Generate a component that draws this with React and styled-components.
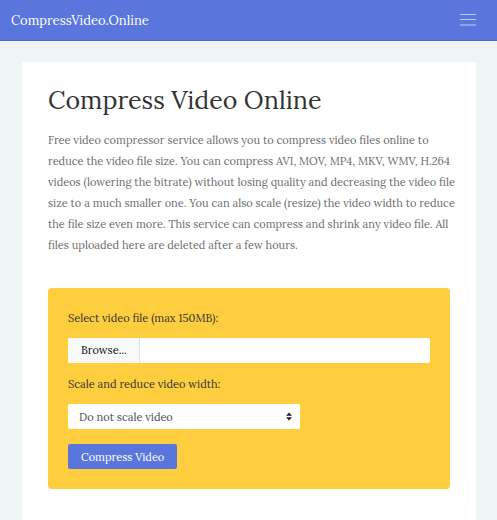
import React from "react"
import styled, { createGlobalStyle } from "styled-components"

const GlobalStyle = createGlobalStyle`
  *,
  *::before,
  *::after {
    box-sizing: border-box;
  }

  body {
    margin: 0;
    background: #eff4f6;
    color: #6c6c6c;
    font-family: Lora, "Liberation Serif", serif;
    font-size: 11px;
  }
`

const Navbar = styled.nav`
  display: flex;
  align-items: center;
  justify-content: space-between;
  height: 41px;
  padding: 0 21px 0 11px;
  border-bottom: 1px solid #5069c9;
  background: #5a76dc;
`

const Brand = styled.a`
  color: #fff;
  font-size: 13px;
  text-decoration: none;
`

const MenuButton = styled.button`
  padding: 0;
  border: 0;
  background: none;
  cursor: pointer;

  svg {
    display: block;
    width: 16px;
    height: 12px;
    stroke: #c0ccf5;
  }
`

const Card = styled.main`
  min-height: 458px;
  margin: 21px 21px 0 22px;
  padding: 21px 26px 31px;
  border-radius: 2px 2px 0 0;
  background: #fff;
`

const Title = styled.h1`
  margin: 0;
  color: #333;
  font-size: 25px;
  font-weight: 400;
  line-height: 34px;
`

const Intro = styled.p`
  margin: 13px -8px 32px 0;
  line-height: 21px;
`

const Form = styled.form`
  display: flex;
  flex-direction: column;
  align-items: flex-start;
  padding: 20px;
  border-radius: 4px;
  background: #ffce3e;
`

const Field = styled.div`
  display: flex;
  flex-direction: column;
  width: ${({ $width }) => $width || "100%"};
  margin-bottom: 11px;
`

const Label = styled.label`
  margin-bottom: 10px;
  color: #333;
  line-height: 20px;
`

const FilePicker = styled.label`
  display: flex;
  position: relative;
  height: 25px;
  border-radius: 2px;
  background: #fff;
  overflow: hidden;
  cursor: pointer;

  input {
    position: absolute;
    width: 1px;
    height: 1px;
    opacity: 0;
  }

  span {
    padding: 0 12px 0 13px;
    border-right: 1px solid #dee2e6;
    background: #f8f9fa;
    color: #111;
    line-height: 25px;
  }
`

const SelectBox = styled.div`
  display: flex;
  position: relative;

  svg {
    position: absolute;
    top: 0;
    right: 8px;
    width: 6px;
    height: 100%;
    fill: #222;
    pointer-events: none;
  }
`

const Select = styled.select`
  width: 100%;
  height: 25px;
  padding: 0 11px;
  border: 0;
  border-radius: 2px;
  background: #fff;
  color: #495057;
  font: inherit;
  appearance: none;
`

const Submit = styled.button`
  height: 25px;
  margin-top: 4px;
  padding: 0 13px;
  border: 0;
  border-radius: 2px;
  background: #5a76dc;
  color: #fff;
  font: inherit;
  cursor: pointer;
`

const App = () => (
  <>
    <GlobalStyle />
    <Navbar>
      <Brand href="#">CompressVideo.Online</Brand>
      <MenuButton type="button" aria-label="Toggle navigation">
        <svg viewBox="0 0 16 12">
          <path d="M0 .5h16M0 5.5h16M0 11h16" />
        </svg>
      </MenuButton>
    </Navbar>
    <Card>
      <Title>Compress Video Online</Title>
      <Intro>
        Free video compressor service allows you to compress video files online
        to reduce the video file size. You can compress AVI, MOV, MP4, MKV, WMV,
        H.264 videos (lowering the bitrate) without losing quality and
        decreasing the video file size to a much smaller one. You can also scale
        (resize) the video width to reduce the file size even more. This service
        can compress and shrink any video file. All files uploaded here are
        deleted after a few hours.
      </Intro>
      <Form>
        <Field>
          <Label htmlFor="video">Select video file (max 150MB):</Label>
          <FilePicker>
            <input type="file" id="video" />
            <span>Browse...</span>
          </FilePicker>
        </Field>
        <Field $width="64%">
          <Label htmlFor="width">Scale and reduce video width:</Label>
          <SelectBox>
            <Select id="width">
              <option>Do not scale video</option>
            </Select>
            <svg viewBox="0 0 6 8" aria-hidden="true">
              <path d="M0 3.3L3 0l3 3.3zM0 4.7h6L3 8z" />
            </svg>
          </SelectBox>
        </Field>
        <Submit type="submit">Compress Video</Submit>
      </Form>
    </Card>
  </>
)

export default App
